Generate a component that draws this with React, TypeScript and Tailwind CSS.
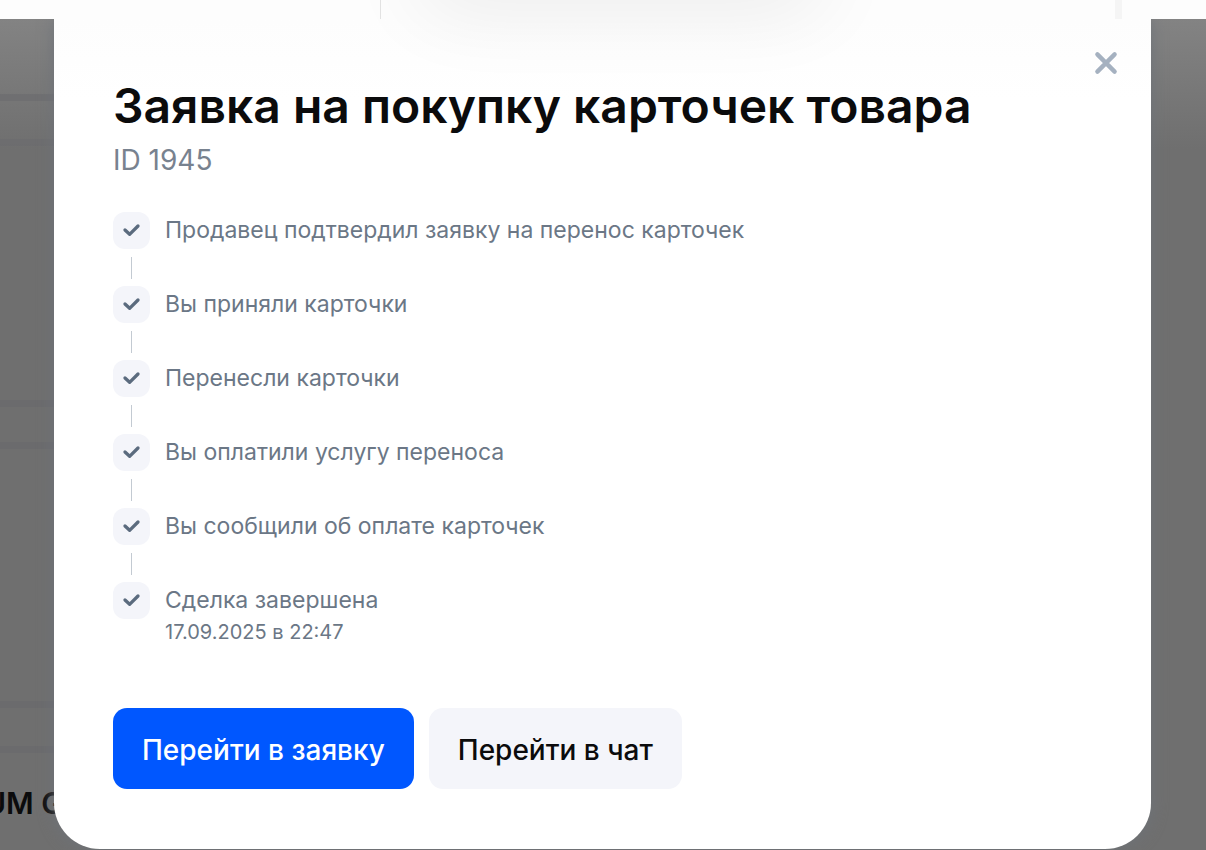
import { useState } from 'react';

interface Step {
  title: string;
  date?: string;
}

const STEPS: Step[] = [
  { title: 'Продавец подтвердил заявку на перенос карточек' },
  { title: 'Вы приняли карточки' },
  { title: 'Перенесли карточки' },
  { title: 'Вы оплатили услугу переноса' },
  { title: 'Вы сообщили об оплате карточек' },
  { title: 'Сделка завершена', date: '17.09.2025 в 22:47' },
];

function CheckIcon() {
  return (
    <svg viewBox="0 0 20 20" className="w-5 h-5" fill="none" stroke="#5b6b7e" strokeWidth="3.3" strokeLinecap="round" strokeLinejoin="round">
      <path d="M3 9 L7.6 13.3 L16 5" />
    </svg>
  );
}

function CloseIcon() {
  return (
    <svg viewBox="0 0 24 24" className="w-6 h-6" fill="none" stroke="#a5b1c0" strokeWidth="4.4" strokeLinecap="round">
      <path d="M3.4 3.4 L20.6 20.6 M20.6 3.4 L3.4 20.6" />
    </svg>
  );
}

/* Dimmed page under the dialog */
function Backdrop() {
  return (
    <div className="col-start-1 row-start-1 overflow-hidden bg-linear-to-b from-[#838383] to-[#6f6f6f] to-[130px]">
      <div className="w-1/2">
        <div className="h-[75px]" />
        <div className="h-[52px] border-y-[7px] border-[#6b6b6e]/60" />
        <div className="h-[254px]" />
        <div className="h-[49px] border-y-[7px] border-[#69696c]/70" />
        <div className="h-[252px]" />
        <div className="h-[52px] border-y-[7px] border-[#69696c]/70" />
        <p className="mt-8 -ml-4 text-[30px] leading-9 font-semibold text-[#0b0b0c] whitespace-nowrap">UM G</p>
      </div>
    </div>
  );
}

function StepItem({ step, last }: { step: Step; last: boolean }) {
  return (
    <li className="flex gap-[15px]">
      <div className="flex flex-col items-center">
        <span className="w-[37px] h-[37px] rounded-xl bg-[#f4f5fa] flex items-center justify-center">
          <CheckIcon />
        </span>
        {!last && <span className="w-px h-[22px] mt-2 mb-[7px] bg-[#c3cad2]" />}
      </div>
      <div>
        <p className="text-[23px] leading-9 text-[#6b7786]">{step.title}</p>
        {step.date && <p className="text-[20px] leading-7 text-[#6b7786]">{step.date}</p>}
      </div>
    </li>
  );
}

export default function App() {
  const [open, setOpen] = useState(true);

  return (
    <div className="relative min-h-screen flex flex-col overflow-hidden bg-[#6f6f6f] font-['Inter','Liberation_Sans',sans-serif]">
      <header className="relative z-20 h-[19px] shrink-0 bg-[#fdfdfd] flex justify-between pl-[380px] pr-[84px]">
        <span className="w-px bg-[#e3e3e3]" />
        <span className="w-[7px] bg-[#f5f5f5]" />
      </header>

      <main className="grow grid">
        <Backdrop />
        {open && (
          <section
            role="dialog"
            aria-labelledby="dialog-title"
            className="col-start-1 row-start-1 z-10 ml-[54px] mr-[55px] mb-px flex flex-col rounded-b-[46px] bg-linear-to-b from-[#fdfdfd] to-white to-[80px] px-[59px] pb-[60px] shadow-[0_0_16px_#6e737a]"
          >
            <button
              type="button"
              aria-label="Закрыть"
              onClick={() => setOpen(false)}
              className="self-end mt-8 -mr-[26px] cursor-pointer"
            >
              <CloseIcon />
            </button>

            <h1 id="dialog-title" className="mt-[3px] text-[48px] leading-[56px] font-semibold text-[#0b0b0c]">
              Заявка на покупку карточек товара
            </h1>
            <p className="mt-2 text-[28px] leading-9 text-[#78828f]">ID 1945</p>

            <ol className="mt-[34px]">
              {STEPS.map((step, i) => (
                <StepItem key={step.title} step={step} last={i === STEPS.length - 1} />
              ))}
            </ol>

            <div className="mt-auto flex gap-[15px]">
              <button type="button" className="h-[81px] px-[29px] pt-0.5 rounded-[14px] bg-[#0057ff] text-[28px] font-medium text-white cursor-pointer">
                Перейти в заявку
              </button>
              <button type="button" className="h-[81px] px-[29px] pt-0.5 rounded-[14px] bg-[#f4f5fa] text-[28px] font-medium text-[#0b0b0c] cursor-pointer">
                Перейти в чат
              </button>
            </div>
          </section>
        )}
      </main>

      {/* Shadow cast by the panel above the page */}
      <div className="absolute z-30 -top-[60px] left-[36%] w-[31%] h-10 rounded-[20px] shadow-[0_12px_80px_20px_rgba(0,0,0,0.07)] pointer-events-none" />
    </div>
  );
}
